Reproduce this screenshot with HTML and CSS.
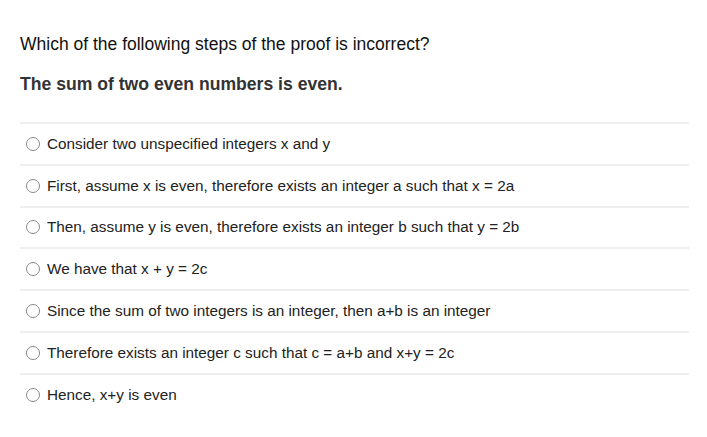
FILE: index.html
```html
<!DOCTYPE html>
<html>
<head>
<meta charset="utf-8">
<link rel="stylesheet" href="styles.css">
</head>
<body>
<div class="quiz">
  <p class="question">Which of the following steps of the proof is incorrect?</p>
  <p class="claim">The sum of two even numbers is even.</p>
  <ul class="options">
    <li class="option"><span class="radio"></span><span>Consider two unspecified integers x and y</span></li>
    <li class="option"><span class="radio"></span><span>First, assume x is even, therefore exists an integer a such that x = 2a</span></li>
    <li class="option"><span class="radio"></span><span>Then, assume y is even, therefore exists an integer b such that y = 2b</span></li>
    <li class="option"><span class="radio"></span><span>We have that x + y = 2c</span></li>
    <li class="option"><span class="radio"></span><span>Since the sum of two integers is an integer, then a+b is an integer</span></li>
    <li class="option"><span class="radio"></span><span>Therefore exists an integer c such that c = a+b and x+y = 2c</span></li>
    <li class="option"><span class="radio"></span><span>Hence, x+y is even</span></li>
  </ul>
</div>
</body>
</html>
```

FILE: styles.css
```css
html, body {
  margin: 0;
  padding: 0;
  background: #fff;
}
body {
  font-family: "Liberation Sans", Arial, sans-serif;
  font-size: 15.3px;
  color: #222;
}
.quiz {
  width: 669px;
  padding: 34px 0 0 20px;
}
.question {
  margin: 0;
  font-size: 17.5px;
  line-height: 20px;
  color: #111;
}
.claim {
  margin: 20px 0 0 0;
  font-size: 17.6px;
  line-height: 20px;
  font-weight: bold;
  color: #333;
}
.options {
  list-style: none;
  margin: 28px 0 0 0;
  padding: 0;
}
.option {
  border-top: 2px solid #eeeeee;
  height: 39.8px;
  display: flex;
  align-items: center;
  padding-left: 6px;
  color: #222;
}
.radio {
  width: 12px;
  height: 12px;
  border: 1px solid #8a8a8a;
  border-radius: 50%;
  margin-right: 7px;
  flex: none;
}
```
